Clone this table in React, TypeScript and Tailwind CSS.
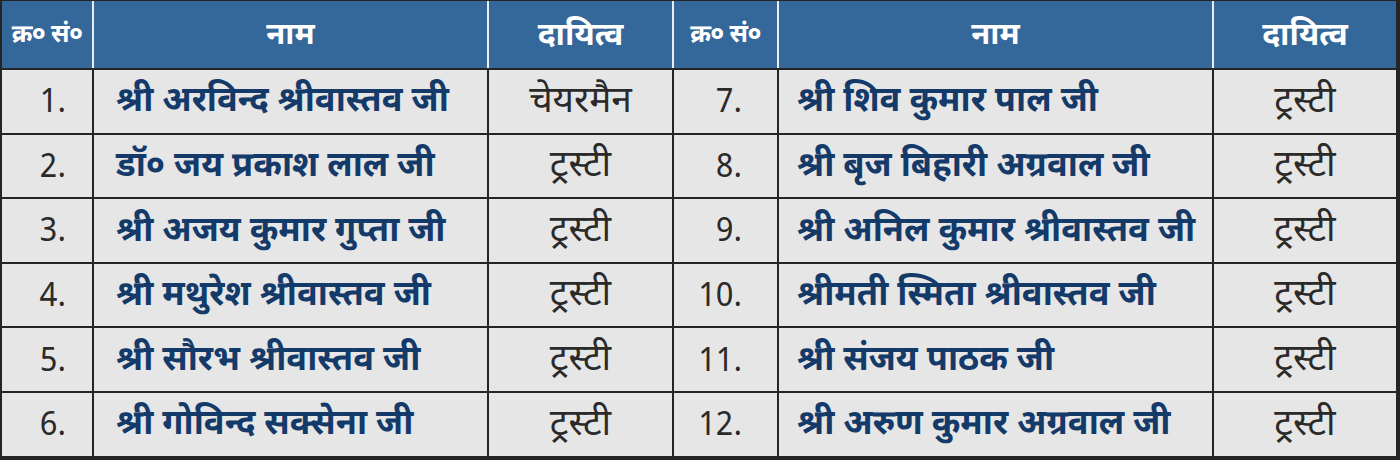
import React from 'react';

type Member = { sn: string; name: string; role: string };

const left: Member[] = [
  { sn: '1.', name: 'श्री अरविन्द श्रीवास्तव जी', role: 'चेयरमैन' },
  { sn: '2.', name: 'डॉ० जय प्रकाश लाल जी', role: 'ट्रस्टी' },
  { sn: '3.', name: 'श्री अजय कुमार गुप्ता जी', role: 'ट्रस्टी' },
  { sn: '4.', name: 'श्री मथुरेश श्रीवास्तव जी', role: 'ट्रस्टी' },
  { sn: '5.', name: 'श्री सौरभ श्रीवास्तव जी', role: 'ट्रस्टी' },
  { sn: '6.', name: 'श्री गोविन्द सक्सेना जी', role: 'ट्रस्टी' },
];

const right: Member[] = [
  { sn: '7.', name: 'श्री शिव कुमार पाल जी', role: 'ट्रस्टी' },
  { sn: '8.', name: 'श्री बृज बिहारी अग्रवाल जी', role: 'ट्रस्टी' },
  { sn: '9.', name: 'श्री अनिल कुमार श्रीवास्तव जी', role: 'ट्रस्टी' },
  { sn: '10.', name: 'श्रीमती स्मिता श्रीवास्तव जी', role: 'ट्रस्टी' },
  { sn: '11.', name: 'श्री संजय पाठक जी', role: 'ट्रस्टी' },
  { sn: '12.', name: 'श्री अरुण कुमार अग्रवाल जी', role: 'ट्रस्टी' },
];

const cols = 'grid grid-cols-[90px_393px_183px_103px_433px_182px] gap-x-[2px]';

export default function App() {
  return (
    <div
      className="w-[1400px] h-[460px] bg-[#252525] pt-[1px] pl-[2px] pr-[4px] pb-[4px] overflow-hidden"
      style={{ fontFamily: '"Noto Sans Devanagari", "Noto Sans", sans-serif' }}
    >
      {/* Header */}
      <div className={`${cols} h-[67px] bg-[#e9eef4] text-white font-bold`}>
        <div className="bg-[#34679a] flex items-center justify-center pt-[5px] text-[25px] tracking-tight whitespace-nowrap">क्र० सं०</div>
        <div className="bg-[#34679a] flex items-center justify-center pt-[5px] text-[31px]">नाम</div>
        <div className="bg-[#34679a] flex items-center justify-center pt-[5px] text-[32px]">दायित्व</div>
        <div className="bg-[#34679a] flex items-center justify-center pt-[5px] text-[25px] tracking-tight whitespace-nowrap">क्र० सं०</div>
        <div className="bg-[#34679a] flex items-center justify-center pt-[5px] text-[31px]">नाम</div>
        <div className="bg-[#34679a] flex items-center justify-center pt-[5px] text-[32px]">दायित्व</div>
      </div>

      {/* Rows */}
      <div className="flex flex-col gap-y-[2px] mt-[2px]">
        {left.map((l, i) => {
          const r = right[i];
          return (
            <div key={l.sn} className={`${cols} h-[62.6px]`}>
              <div className="bg-[#e6e6e6] flex items-center justify-end pt-[6px] pr-[26px] text-[32px] text-[#2a2a2a]">{l.sn}</div>
              <div className="bg-[#e6e6e6] flex items-center pt-[4px] pl-[22px] text-[34.5px] font-bold text-[#143a6a] whitespace-nowrap">{l.name}</div>
              <div className="bg-[#e6e6e6] flex items-center justify-center pt-[4px] text-[37px] text-[#2a2a2a]">{l.role}</div>
              <div className="bg-[#e6e6e6] flex items-center justify-end pt-[6px] pr-[35px] text-[32px] text-[#2a2a2a]">{r.sn}</div>
              <div className="bg-[#e6e6e6] flex items-center pt-[4px] pl-[18px] text-[34.5px] font-bold text-[#143a6a] whitespace-nowrap">{r.name}</div>
              <div className="bg-[#e6e6e6] flex items-center justify-center pt-[4px] text-[37px] text-[#2a2a2a]">{r.role}</div>
            </div>
          );
        })}
      </div>
    </div>
  );
}
